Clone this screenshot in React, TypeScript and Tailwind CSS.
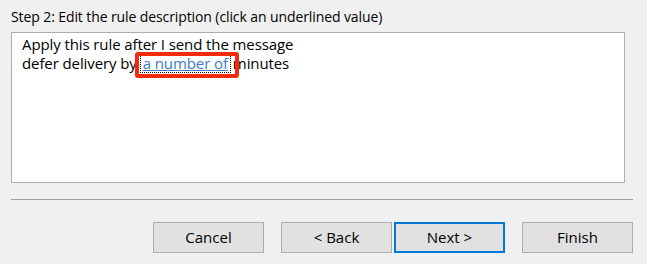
import React from "react";

export default function App() {
  const font = { fontFamily: '"Open Sans", "Noto Sans", sans-serif' };
  return (
    <div className="w-[647px] h-[264px] bg-[#f0f0f0] text-black overflow-hidden" style={font}>
      <div className="pl-[11px] pt-[7px] text-[14px] leading-[20px] tracking-[-0.1px] whitespace-nowrap">
        Step 2: Edit the rule description (click an underlined value)
      </div>
      <div className="ml-[11px] mt-[5px] w-[614px] h-[151px] bg-white border border-[#adadad] pl-[10px] pt-[2px] text-[15px] leading-[19px] tracking-[-0.1px] whitespace-nowrap">
        <div>Apply this rule after I send the message</div>
        <div>
          defer delivery by
          <span className="relative inline-block ml-[4px] mr-[3px] leading-[17px] outline-1 outline-dotted outline-black px-[2px]">
            <span className="text-[#3a7bc4] underline decoration-[#3a7bc4] decoration-1 underline-offset-[1px]">a number of</span>
            <span className="absolute left-[-6px] right-[-9px] top-[-3px] bottom-[-6px] border-[4px] border-[#f22b0c] rounded-[3px]" />
          </span>
          minutes
        </div>
      </div>
      <div className="ml-[11px] mt-[16px] w-[622px] h-px bg-[#a0a0a0]" />
      <div className="flex mt-[22px] pl-[153px] text-[15px]">
        <button className="w-[111px] h-[31px] bg-[#e1e1e1] border border-[#adadad]">Cancel</button>
        <button className="ml-[17px] w-[111px] h-[31px] bg-[#e1e1e1] border border-[#adadad]">&lt; Back</button>
        <button className="ml-[2px] w-[111px] h-[31px] bg-[#e1e1e1] border-2 border-[#0078d7]">Next &gt;</button>
        <button className="ml-[17px] w-[111px] h-[31px] bg-[#e1e1e1] border border-[#adadad]">Finish</button>
      </div>
    </div>
  );
}
